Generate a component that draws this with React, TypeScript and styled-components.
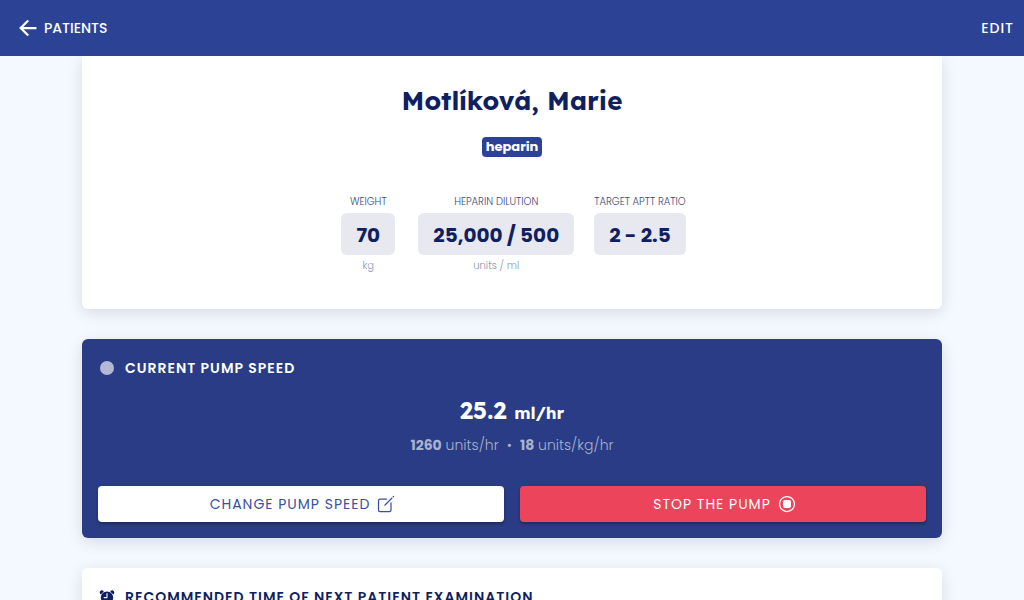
import React from "react";
import styled, { createGlobalStyle } from "styled-components";
import { IoAlarm, IoArrowBackSharp, IoCreateOutline } from "react-icons/io5";

const GlobalStyle = createGlobalStyle`
  *, *::before, *::after { box-sizing: border-box; }
  body {
    margin: 0;
    background: #f4f9ff;
    color: #0f1f5f;
    font-family: Poppins, Inter, "Liberation Sans", sans-serif;
    font-size: 14px;
  }
`;

const displayFont = `Lexend, Poppins, Inter, sans-serif`;

const Page = styled.div`
  display: flex;
  flex-direction: column;
  height: 100vh;
`;

const Toolbar = styled.header`
  display: flex;
  align-items: center;
  justify-content: space-between;
  flex: none;
  height: 56px;
  padding: 0 10px 0 16px;
  background: #2c4395;
  color: #ffffff;
`;

const BackLink = styled.a`
  display: flex;
  align-items: center;
  gap: 4px;
  color: inherit;
  font-weight: 500;
  text-decoration: none;
`;

const EditButton = styled.button`
  padding: 0;
  border: 0;
  background: none;
  color: inherit;
  font: inherit;
  font-weight: 500;
  letter-spacing: 1px;
  cursor: pointer;
`;

const Content = styled.main`
  flex: 1;
  min-height: 0;
  overflow-y: auto;
  scrollbar-width: none;
`;

const Column = styled.div`
  display: flex;
  flex-direction: column;
  gap: 30px;
  max-width: 860px;
  margin: 0 auto;
  padding-bottom: 30px;
`;

const Card = styled.section<{ $dark?: boolean }>`
  padding: 16px;
  border-radius: 6px;
  background: ${(p) => (p.$dark ? "#293c85" : "#ffffff")};
  color: ${(p) => (p.$dark ? "#ffffff" : "#0f1f5f")};
  box-shadow: 0 4px 16px rgba(0, 0, 0, 0.12);
`;

const PatientCard = styled(Card)`
  display: flex;
  flex-direction: column;
  align-items: center;
  padding: 28px 16px 35px;
  border-radius: 0 0 6px 6px;
`;

const PatientName = styled.h1`
  margin: 0;
  font-family: ${displayFont};
  font-size: 26px;
  font-weight: 700;
  line-height: 34px;
`;

const Tag = styled.span`
  margin: 19px 0 36px;
  padding: 0 4px;
  border-radius: 4px;
  background: #2c4395;
  color: #ffffff;
  font-size: 13px;
  font-weight: 700;
  line-height: 20px;
`;

const Facts = styled.dl`
  display: flex;
  justify-content: center;
  align-items: flex-start;
  gap: 20px;
  margin: 0;
`;

const Fact = styled.div`
  display: flex;
  flex-direction: column;
  align-items: center;
  min-width: 60px;
`;

const FactLabel = styled.dt`
  color: #3a477c;
  font-size: 10px;
  font-weight: 300;
  line-height: 18px;
`;

const FactValue = styled.dd`
  margin: 2px 0;
  padding: 2px 15px 0;
  border-radius: 6px;
  background: #e7e8f0;
  font-size: 20px;
  font-weight: 700;
  line-height: 40px;
`;

const FactUnit = styled.dd`
  margin: 0;
  color: #8c93b2;
  font-size: 10px;
  font-weight: 300;
  line-height: 17px;
`;

const CardTitle = styled.h2`
  display: flex;
  align-items: center;
  gap: 9px;
  margin: 0;
  font-size: 14px;
  font-weight: 600;
  letter-spacing: 1px;
  line-height: 26px;
`;

const IconSlot = styled.span`
  display: flex;
  justify-content: center;
  width: 18px;
`;

const StatusDot = styled.span`
  width: 14px;
  height: 14px;
  border-radius: 50%;
  background: #b4bad6;
`;

const Speed = styled.p`
  margin: 13px 0 0;
  font-family: ${displayFont};
  font-size: 24px;
  font-weight: 700;
  line-height: 32px;
  text-align: center;
`;

const SpeedUnit = styled.span`
  font-size: 17px;
`;

const Rates = styled.p`
  display: flex;
  justify-content: center;
  gap: 8px;
  margin: 5px 0 30px;
  color: #a9b1ce;
  font-weight: 300;
  line-height: 22px;

  b { font-weight: 700; }
`;

const Actions = styled.div`
  display: grid;
  grid-template-columns: 1fr 1fr;
  gap: 16px;
`;

const ActionButton = styled.button<{ $danger?: boolean }>`
  display: flex;
  align-items: center;
  justify-content: center;
  gap: 6px;
  height: 36px;
  padding: 0 12px 0 16px;
  border: 0;
  border-radius: 4px;
  background: ${(p) => (p.$danger ? "#ec445a" : "#ffffff")};
  color: ${(p) => (p.$danger ? "#ffffff" : "#3b509f")};
  box-shadow: 0 2px 3px rgba(0, 0, 0, 0.3);
  font: inherit;
  letter-spacing: 1px;
  cursor: pointer;
`;

function StopIcon() {
  return (
    <svg width="20" height="20" viewBox="0 0 20 20" fill="none" aria-hidden>
      <circle cx="10" cy="10" r="7.5" stroke="currentColor" strokeWidth="1.25" />
      <rect x="6" y="6" width="8" height="8" rx="2" fill="currentColor" />
    </svg>
  );
}

const facts = [
  { label: "WEIGHT", value: "70", unit: "kg" },
  { label: "HEPARIN DILUTION", value: "25,000 / 500", unit: "units / ml" },
  { label: "TARGET APTT RATIO", value: "2 - 2.5" },
];

export default function App() {
  return (
    <Page>
      <GlobalStyle />
      <Toolbar>
        <BackLink href="#patients">
          <IoArrowBackSharp size={24} aria-hidden />
          PATIENTS
        </BackLink>
        <EditButton type="button">EDIT</EditButton>
      </Toolbar>
      <Content>
        <Column>
          <PatientCard>
            <PatientName>Motlíková, Marie</PatientName>
            <Tag>heparin</Tag>
            <Facts>
              {facts.map((fact) => (
                <Fact key={fact.label}>
                  <FactLabel>{fact.label}</FactLabel>
                  <FactValue>{fact.value}</FactValue>
                  {fact.unit && <FactUnit>{fact.unit}</FactUnit>}
                </Fact>
              ))}
            </Facts>
          </PatientCard>
          <Card $dark>
            <CardTitle>
              <IconSlot><StatusDot /></IconSlot>
              CURRENT PUMP SPEED
            </CardTitle>
            <Speed>25.2 <SpeedUnit>ml/hr</SpeedUnit></Speed>
            <Rates>
              <span><b>1260</b> units/hr</span>
              <span>•</span>
              <span><b>18</b> units/kg/hr</span>
            </Rates>
            <Actions>
              <ActionButton type="button">
                CHANGE PUMP SPEED
                <IoCreateOutline size={20} aria-hidden />
              </ActionButton>
              <ActionButton type="button" $danger>
                STOP THE PUMP
                <StopIcon />
              </ActionButton>
            </Actions>
          </Card>
          <Card>
            <CardTitle>
              <IconSlot><IoAlarm size={18} aria-hidden /></IconSlot>
              RECOMMENDED TIME OF NEXT PATIENT EXAMINATION
            </CardTitle>
          </Card>
        </Column>
      </Content>
    </Page>
  );
}
